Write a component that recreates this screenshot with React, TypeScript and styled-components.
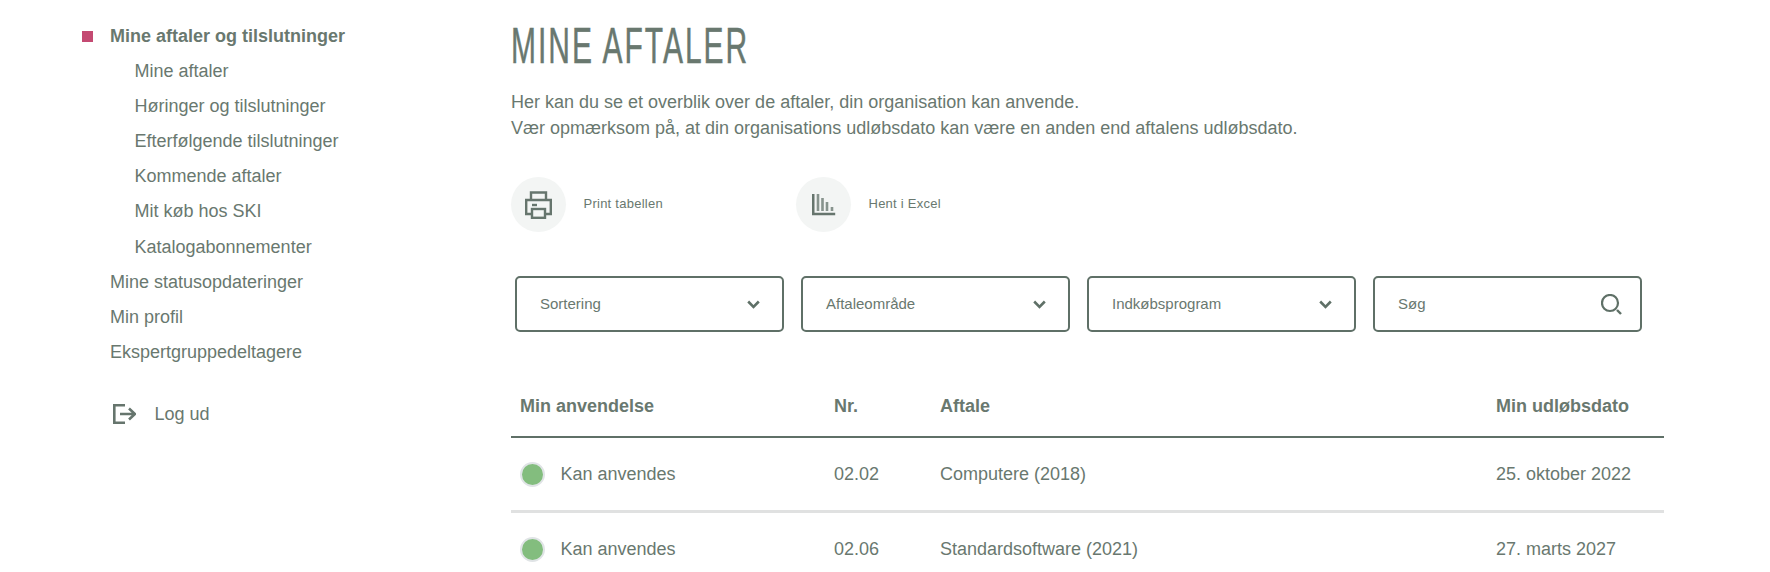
import React from "react";
import styled, { createGlobalStyle } from "styled-components";

const GlobalStyle = createGlobalStyle`
    html, body {
        margin: 0;
        height: 100%;
        overflow: hidden;
        background: #fff;
    }
    body {
        font-family: "Liberation Sans", Arial, sans-serif;
        color: #69786f;
    }
`;

const Page = styled.div`
    display: flex;
    align-items: flex-start;
    width: 1770px;
`;

const Sidebar = styled.nav`
    width: 511px;
    flex-shrink: 0;
    padding: 19px 0 0 82px;
    box-sizing: border-box;
`;

const NavRow = styled.div<{ $sub?: boolean; $active?: boolean }>`
    position: relative;
    height: 35.1px;
    line-height: 35.1px;
    font-size: 18px;
    padding-left: ${({ $sub }) => ($sub ? "52.5px" : "28px")};
    font-weight: ${({ $active }) => ($active ? 700 : 400)};
    white-space: nowrap;
`;

const Bullet = styled.span`
    position: absolute;
    left: 0;
    top: 12px;
    width: 11px;
    height: 11px;
    background: #c44a72;
`;

const Logout = styled.div`
    display: flex;
    align-items: center;
    gap: 19px;
    margin: 27px 0 0 30.5px;
    font-size: 18px;
    height: 35px;

    svg {
        display: block;
    }
`;

const Main = styled.main`
    width: 1153px;
    flex-shrink: 0;
`;

const Title = styled.h1`
    margin: 19px 0 0;
    font-family: "Liberation Sans", sans-serif;
    font-size: 50px;
    line-height: 54px;
    font-weight: 400;
    letter-spacing: 3.3px;
    white-space: nowrap;
    transform: scaleX(0.6);
    transform-origin: left center;
    -webkit-text-stroke: 0.5px #69786f;
`;

const Intro = styled.p`
    margin: 16px 0 0;
    font-size: 18px;
    line-height: 26px;
`;

const Actions = styled.div`
    display: flex;
    margin-top: 36px;
`;

const Action = styled.div`
    display: flex;
    align-items: center;
    width: 285px;
    gap: 17.5px;
    font-size: 13px;
    letter-spacing: 0.25px;
`;

const ActionLabel = styled.span`
    margin-bottom: 2px;
`;

const IconCircle = styled.span`
    display: flex;
    align-items: center;
    justify-content: center;
    width: 55px;
    height: 55px;
    border-radius: 50%;
    background: #f3f5f4;
`;

const Filters = styled.div`
    display: flex;
    gap: 17px;
    margin: 44px 0 0 4px;
`;

const Field = styled.div<{ $search?: boolean }>`
    display: flex;
    align-items: center;
    justify-content: space-between;
    box-sizing: border-box;
    width: 269px;
    height: 56px;
    padding: 0 ${({ $search }) => ($search ? "18px" : "22px")} 0 23px;
    border: 2px solid #5f7067;
    border-radius: 5px;
    font-size: 15px;
`;

const FieldLabel = styled.span`
    margin-bottom: 2px;
`;

const Table = styled.div`
    margin-top: 44px;
`;

const Row = styled.div<{ $head?: boolean }>`
    display: grid;
    grid-template-columns: 314px 106px 556px 1fr;
    align-items: center;
    padding-left: 9px;
    height: ${({ $head }) => ($head ? "60px" : "72px")};
    font-size: 18px;
    font-weight: ${({ $head }) => ($head ? 700 : 400)};
    border-bottom: ${({ $head }) => ($head ? "2px solid #5f7067" : "3px solid #e0e1e1")};
`;

const Status = styled.div`
    display: flex;
    align-items: center;
    gap: 15.5px;
`;

const Dot = styled.span`
    width: 21px;
    height: 21px;
    border-radius: 50%;
    background: #83bd7e;
    border: 2px solid #e0e4e6;
`;

const PrinterIcon = () => (
    <svg width="27" height="28" viewBox="0 0 27 28" fill="none" stroke="#66756d" strokeWidth="2.4">
        <path d="M6 9V1.5h15V9" />
        <path d="M6 23H1.2V9h24.6v14H21" />
        <rect x="7" y="18" width="13" height="8.8" />
        <path d="M7 14h5" />
    </svg>
);

const ChartIcon = () => (
    <svg width="24" height="22" viewBox="0 0 24 22" fill="none">
        <path d="M1.2 0v20h22" stroke="#66756d" strokeWidth="2.6" />
        <path d="M6 0v17M10.5 4v13M15 8v9M20 13v4" stroke="#87938d" strokeWidth="2.6" />
    </svg>
);

const LogoutIcon = () => (
    <svg width="23" height="20" viewBox="0 0 23 20" fill="none" stroke="#66756d" strokeWidth="2.6">
        <path d="M12 1.3H1.3v17.4H12" />
        <path d="M7 10h15M16 4.5l6 5.5-6 5.5" />
    </svg>
);

const Chevron = () => (
    <svg width="13" height="9" viewBox="0 0 13 9" fill="none" stroke="#5f7067" strokeWidth="2.6">
        <path d="M1.2 1.5l5.3 5.3 5.3-5.3" />
    </svg>
);

const SearchIcon = () => (
    <svg width="21" height="21" viewBox="0 0 21 21" fill="none" stroke="#5f7067">
        <circle cx="9" cy="9" r="8" strokeWidth="2.2" />
        <path d="M16 16l4 4" strokeWidth="2.4" />
    </svg>
);

const subItems = [
    "Mine aftaler",
    "Høringer og tilslutninger",
    "Efterfølgende tilslutninger",
    "Kommende aftaler",
    "Mit køb hos SKI",
    "Katalogabonnementer",
];

const topItems = ["Mine statusopdateringer", "Min profil", "Ekspertgruppedeltagere"];

const rows = [
    { nr: "02.02", name: "Computere (2018)", date: "25. oktober 2022" },
    { nr: "02.06", name: "Standardsoftware (2021)", date: "27. marts 2027" },
];

export default function App() {
    return (
        <>
            <GlobalStyle />
            <Page>
                <Sidebar>
                    <NavRow $active>
                        <Bullet />
                        Mine aftaler og tilslutninger
                    </NavRow>
                    {subItems.map((item) => (
                        <NavRow $sub key={item}>{item}</NavRow>
                    ))}
                    {topItems.map((item) => (
                        <NavRow key={item}>{item}</NavRow>
                    ))}
                    <Logout>
                        <LogoutIcon />
                        Log ud
                    </Logout>
                </Sidebar>
                <Main>
                    <Title>MINE AFTALER</Title>
                    <Intro>
                        Her kan du se et overblik over de aftaler, din organisation kan anvende.
                        <br />
                        Vær opmærksom på, at din organisations udløbsdato kan være en anden end aftalens udløbsdato.
                    </Intro>
                    <Actions>
                        <Action>
                            <IconCircle><PrinterIcon /></IconCircle>
                            <ActionLabel>Print tabellen</ActionLabel>
                        </Action>
                        <Action>
                            <IconCircle><ChartIcon /></IconCircle>
                            <ActionLabel>Hent i Excel</ActionLabel>
                        </Action>
                    </Actions>
                    <Filters>
                        <Field><FieldLabel>Sortering</FieldLabel><Chevron /></Field>
                        <Field><FieldLabel>Aftaleområde</FieldLabel><Chevron /></Field>
                        <Field><FieldLabel>Indkøbsprogram</FieldLabel><Chevron /></Field>
                        <Field $search><FieldLabel>Søg</FieldLabel><SearchIcon /></Field>
                    </Filters>
                    <Table>
                        <Row $head>
                            <span>Min anvendelse</span>
                            <span>Nr.</span>
                            <span>Aftale</span>
                            <span>Min udløbsdato</span>
                        </Row>
                        {rows.map((row) => (
                            <Row key={row.nr}>
                                <Status><Dot />Kan anvendes</Status>
                                <span>{row.nr}</span>
                                <span>{row.name}</span>
                                <span>{row.date}</span>
                            </Row>
                        ))}
                    </Table>
                </Main>
            </Page>
        </>
    );
}
